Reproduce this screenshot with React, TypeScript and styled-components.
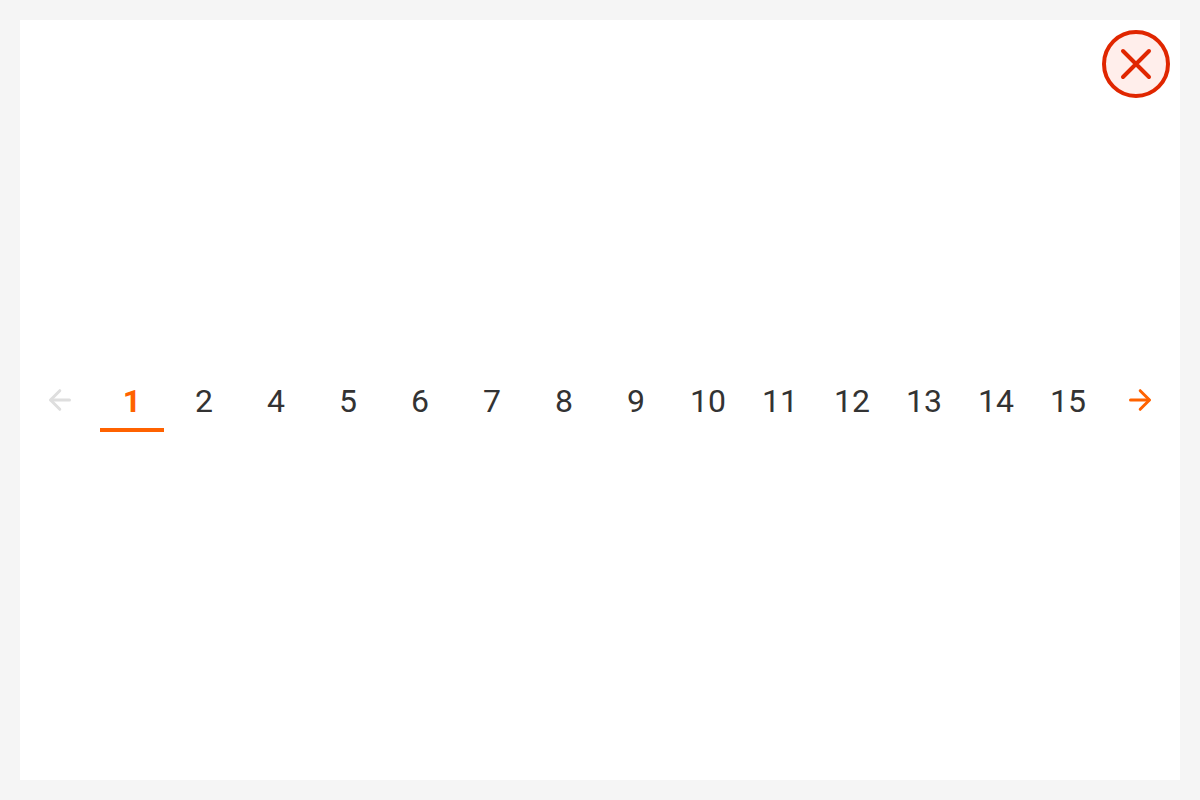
import React from "react";
import styled, { createGlobalStyle } from "styled-components";

const GlobalStyle = createGlobalStyle`
  * { box-sizing: border-box; }
  body {
    margin: 0;
    background: #f5f5f5;
    font-family: Roboto, "Liberation Sans", Arial, sans-serif;
  }
`;

const Page = styled.main`
  min-height: 100vh;
  padding: 20px;
  display: flex;
`;

const Panel = styled.section`
  position: relative;
  flex: 1;
  display: flex;
  align-items: center;
  justify-content: center;
  background: #ffffff;
`;

const Badge = styled.svg`
  position: absolute;
  top: 10px;
  right: 10px;
  width: 68px;
  height: 68px;
`;

const Pager = styled.nav`
  display: flex;
  align-items: center;
  gap: 8px;
`;

const Pages = styled.ol`
  display: flex;
  gap: 8px;
  margin: 0;
  padding: 0;
  list-style: none;
`;

const PageButton = styled.button<{ $current: boolean }>`
  width: 64px;
  height: 64px;
  padding: 6px 0 0;
  border: 0;
  border-bottom: 4px solid ${(p) => (p.$current ? "#ff6200" : "transparent")};
  background: none;
  color: ${(p) => (p.$current ? "#ff6200" : "#333333")};
  font-family: inherit;
  font-size: 32px;
  line-height: 48px;
  font-weight: ${(p) => (p.$current ? 700 : 400)};
  text-align: center;
  cursor: pointer;
`;

const ArrowButton = styled.button`
  display: flex;
  align-items: center;
  justify-content: center;
  width: 64px;
  height: 64px;
  padding: 0;
  border: 0;
  background: none;
  color: #ff6200;
  cursor: pointer;

  &:disabled {
    color: #dedede;
    cursor: default;
  }
`;

const pages = [1, 2, 4, 5, 6, 7, 8, 9, 10, 11, 12, 13, 14, 15];

function Arrow({ shaft, head }: { shaft: string; head: string }) {
  return (
    <svg width="32" height="32" viewBox="0 0 32 32" fill="none" stroke="currentColor" strokeWidth="3" strokeLinecap="round" strokeLinejoin="round" aria-hidden="true">
      <path d={shaft} />
      <path d={head} />
    </svg>
  );
}

export default function App() {
  return (
    <>
      <GlobalStyle />
      <Page>
        <Panel>
          <Badge viewBox="0 0 68 68" role="img" aria-label="Incorrect">
            <circle cx="34" cy="34" r="32" fill="#ffeeeb" stroke="#e02600" strokeWidth="4" />
            <path d="M21 21L47 47M47 21L21 47" stroke="#e02600" strokeWidth="4" strokeLinecap="round" />
          </Badge>
          <Pager aria-label="Pagination">
            <ArrowButton type="button" disabled aria-label="Previous page">
              <Arrow shaft="M25.5 16H7" head="M15.8 6.7L6.5 16L15.8 25.3" />
            </ArrowButton>
            <Pages>
              {pages.map((page) => (
                <li key={page}>
                  <PageButton type="button" $current={page === 1} aria-current={page === 1 ? "page" : undefined}>
                    {page}
                  </PageButton>
                </li>
              ))}
            </Pages>
            <ArrowButton type="button" aria-label="Next page">
              <Arrow shaft="M6.5 16H25" head="M16.2 6.7L25.5 16L16.2 25.3" />
            </ArrowButton>
          </Pager>
        </Panel>
      </Page>
    </>
  );
}
